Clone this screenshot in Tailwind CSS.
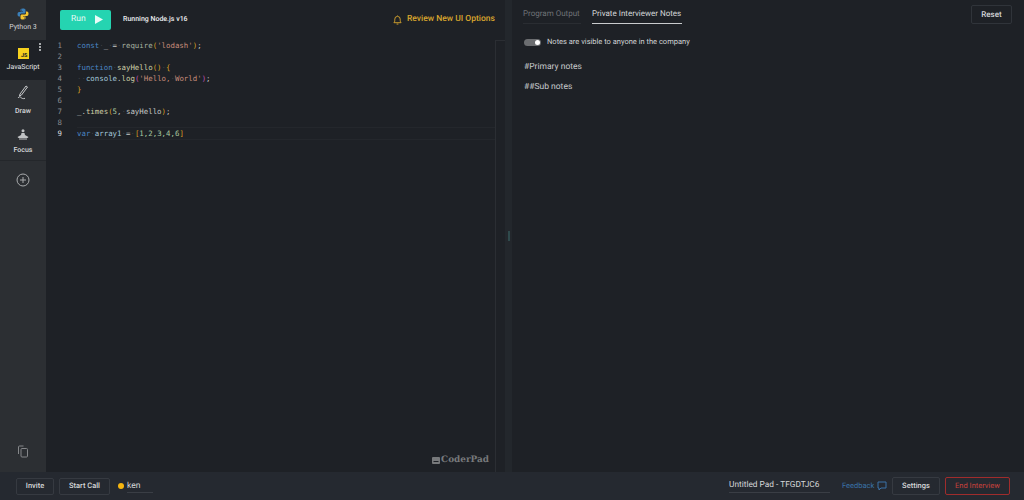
<!DOCTYPE html>
<html lang="en">
<head>
  <meta charset="UTF-8">
  <title>CoderPad</title>
  <script src="https://cdn.jsdelivr.net/npm/@tailwindcss/browser@4"></script>
</head>
<body class="bg-[#1e2126] text-[#e4e6e8] font-['Roboto',sans-serif] [text-rendering:geometricPrecision] overflow-hidden">
  <div class="w-[1024px] h-[500px] flex flex-col">
    <div class="flex h-[472px]">
      <!-- Language sidebar -->
      <div class="w-[46px] bg-[#2c2f33] flex flex-col shrink-0">
        <div class="h-[40px] flex flex-col items-center pt-[8px]">
          <svg width="12" height="12" viewBox="0 0 24 24"><path fill="#3b7fb8" d="M12 1c-5 0-5 2-5 3v3h5v1H4c-2 0-3 2-3 4.500S2 17 4 17h2v-3c0-2 1.500-3 3-3h5c1.500 0 3-1 3-3V4c0-2-2-3-5-3zM9 3a1 1 0 110 2 1 1 0 010-2z"/><path fill="#f5c530" d="M12 23c5 0 5-2 5-3v-3h-5v-1h8c2 0 3-2 3-4.500S22 7 20 7h-2v3c0 2-1.500 3-3 3h-5c-1.500 0-3 1-3 3v4c0 2 2 3 5 3zm3-2a1 1 0 110-2 1 1 0 010 2z"/></svg>
          <span class="text-[7px] leading-[9px] mt-[3px] text-[#d5d7d9]">Python 3</span>
        </div>
        <div class="h-[40px] bg-[#1e2126] relative flex flex-col items-center pt-[8px]">
          <div class="w-[11px] h-[11px] bg-[#f7d21e] flex items-end justify-end pr-[1px]"><span class="text-[5.500px] leading-[6px] font-bold text-[#222]">JS</span></div>
          <span class="text-[7px] leading-[9px] mt-[4px] text-[#e6e8ea]">JavaScript</span>
          <div class="absolute right-[5px] top-[3px] flex flex-col gap-[1px]">
            <i class="block w-[2px] h-[2px] bg-[#d5d7d9] rounded-full"></i>
            <i class="block w-[2px] h-[2px] bg-[#d5d7d9] rounded-full"></i>
            <i class="block w-[2px] h-[2px] bg-[#d5d7d9] rounded-full"></i>
          </div>
        </div>
        <div class="h-[41px] flex flex-col items-center pt-[5px]">
          <svg width="12" height="16" viewBox="0 0 12 16" fill="none" stroke="#c8cacc" stroke-width="1"><path d="M3 9l6-8 1.500 1-6 8-2 1z"/><path d="M1 13c1-1.500 2-1.500 3-.5s2 1.500 4 .8"/></svg>
          <span class="text-[7px] leading-[9px] mt-[6px] font-medium text-[#d5d7d9]">Draw</span>
        </div>
        <div class="h-[40px] border-b border-[#24272b] flex flex-col items-center pt-[8px]">
          <svg width="12" height="11" viewBox="0 0 12 11" fill="#c0c2c4"><circle cx="6" cy="1.800" r="1.500"/><path d="M4.500 4h3l.5 2 3.500 2-1 1H1.500l-1-1 3.500-2z"/><rect x="2" y="9.500" width="8" height="1"/></svg>
          <span class="text-[7px] leading-[9px] mt-[6px] font-medium text-[#d5d7d9]">Focus</span>
        </div>
        <div class="flex justify-center pt-[12px]">
          <svg width="14" height="14" viewBox="0 0 14 14" fill="none" stroke="#a9abad" stroke-width="1"><circle cx="7" cy="7" r="6"/><path d="M7 4v6M4 7h6"/></svg>
        </div>
        <div class="mt-auto flex justify-center pb-[14px]">
          <svg width="12" height="13" viewBox="0 0 12 13" fill="none" stroke="#85878a" stroke-width="1"><path d="M1.500 9V2a1 1 0 011-1h4"/><rect x="4" y="3.500" width="6.500" height="8.500" rx="1"/></svg>
        </div>
      </div>

      <!-- Editor -->
      <div class="w-[459px] shrink-0 flex flex-col relative">
        <div class="h-[39px] flex items-center pl-[14px] pr-[10px] shrink-0">
          <div class="w-[51px] h-[20px] bg-[#25d4b1] rounded-[2px] flex items-center pl-[11px] gap-[8px] text-[8.500px] text-[#e9fbf7]">
            Run
            <svg width="9" height="9" viewBox="0 0 9 9" fill="#eafcf8"><path d="M1 0l8 4.500-8 4.500z"/></svg>
          </div>
          <span class="ml-[12px] text-[7px] font-medium text-[#eceef0]">Running Node.js v16</span>
          <svg class="ml-auto" width="9" height="10" viewBox="0 0 10 11" fill="none" stroke="#d9a62e" stroke-width="1"><path d="M1 8.500c1-1 1-2 1-4a3 3 0 016 0c0 2 0 3 1 4zM4 10h2M5 1V.5"/></svg>
          <span class="ml-[5px] w-[88px] text-[8.500px] font-medium text-[#d9a62e] whitespace-nowrap">Review New UI Options</span>
        </div>
        <div class="flex-1 flex">
          <div class="w-[31px] pt-[1px] text-right pr-[15px] font-['DejaVu_Sans_Mono',monospace] text-[7.400px] leading-[11px] text-[#8b8e92]">
            <div>1</div><div>2</div><div>3</div><div>4</div><div>5</div><div>6</div><div>7</div><div>8</div><div class="text-[#d8dadc]">9</div>
          </div>
          <pre class="flex-1 pt-[1px] font-['DejaVu_Sans_Mono',monospace] text-[7.400px] leading-[11px] text-[#c5c8c6]"><div><span class="text-[#4a86c5]">const</span><span class="text-[#3c4045]">·</span>_<span class="text-[#3c4045]">·</span>=<span class="text-[#3c4045]">·</span><span class="text-[#a8b3a0]">require</span><span class="text-[#d9a023]">(</span><span class="text-[#c98d7b]">'lodash'</span><span class="text-[#d9a023]">)</span>;</div><div> </div><div><span class="text-[#4a86c5]">function</span><span class="text-[#3c4045]">·</span><span class="text-[#cfcfa8]">sayHello</span><span class="text-[#d9a023]">()</span><span class="text-[#3c4045]">·</span><span class="text-[#d9a023]">{</span></div><div><span class="text-[#3c4045]">··</span><span class="text-[#a3c8dc]">console</span>.<span class="text-[#cfcfa8]">log</span><span class="text-[#c052b5]">(</span><span class="text-[#c98d7b]">'Hello,<span class="text-[#3c4045]">·</span>World'</span><span class="text-[#c052b5]">)</span>;</div><div><span class="text-[#d9a023]">}</span></div><div> </div><div>_.<span class="text-[#cfcfa8]">times</span><span class="text-[#d9a023]">(</span><span class="text-[#a8c8a0]">5</span>,<span class="text-[#3c4045]">·</span>sayHello<span class="text-[#d9a023]">)</span>;</div><div> </div><div class="border-y border-[#24272c] -my-[1px] h-[13px] leading-[11px]"><span class="text-[#4a86c5]">var</span><span class="text-[#3c4045]">·</span><span class="text-[#a3c8dc]">array1</span><span class="text-[#3c4045]">·</span>=<span class="text-[#3c4045]">·</span><span class="text-[#d9a023]">[</span><span class="text-[#a8c8a0]">1,2,3,4,6</span><span class="text-[#d9a023]">]</span></div></pre>
          <div class="w-[10px] border-l border-t border-[#2b2e33] mt-[1px]"></div>
        </div>
        <div class="absolute right-[16px] bottom-[6px] flex items-start gap-[1px] text-[#77797b]">
          <svg class="mt-[2px]" width="8" height="7" viewBox="0 0 8 7" fill="#77797b"><rect width="8" height="7" rx="1"/><rect x="1.500" y="4" width="5" height="1" fill="#1e2126"/></svg>
          <span class="font-['DejaVu_Serif',serif] font-bold text-[8.900px] leading-[11px]">CoderPad</span>
        </div>
      </div>

      <!-- Splitter -->
      <div class="w-[7px] shrink-0 bg-[#23272c] flex items-center justify-center">
        <div class="w-[2px] h-[10px] bg-[#2f4a4c]"></div>
      </div>

      <!-- Notes panel -->
      <div class="flex-1 flex flex-col pl-[12px] pr-[12px]">
        <div class="h-[25px] flex items-start justify-between shrink-0">
          <div class="flex gap-[11px] text-[8px] pt-[8px] -ml-[1px]">
            <div class="h-[16px] w-[58px] border-b border-[#2a2d32] text-[#6f7276] whitespace-nowrap">Program Output</div>
            <div class="h-[16px] w-[90px] border-b border-[#c9cbcd] text-[#d5d7d9] whitespace-nowrap">Private Interviewer Notes</div>
          </div>
          <div class="mt-[5px] w-[41px] h-[19px] border border-[#30343a] rounded-[2px] flex items-center justify-center text-[8px] font-medium text-[#d5d7d9]">Reset</div>
        </div>
        <div class="mt-[12px] flex items-center h-[10px]">
          <div class="w-[17px] h-[7px] rounded-full bg-[#6b6d70] relative">
            <i class="absolute right-[1px] top-[1px] w-[5px] h-[5px] rounded-full bg-white"></i>
          </div>
          <span class="ml-[6px] text-[7.500px] text-[#d0d2d4]">Notes are visible to anyone in the company</span>
        </div>
        <p class="mt-[15px] text-[8.500px] leading-[11px] text-[#c8cacc]">#Primary notes</p>
        <p class="mt-[9px] text-[8.500px] leading-[11px] text-[#c8cacc]">##Sub notes</p>
      </div>
    </div>

    <!-- Bottom bar -->
    <div class="h-[28px] bg-[#252930] flex items-center pl-[16px] pr-[14px] text-[7.500px] text-[#d5d7d9]">
      <div class="w-[38px] h-[17px] border border-[#363a41] rounded-[2px] flex items-center justify-center font-medium">Invite</div>
      <div class="ml-[5px] w-[51px] h-[17px] border border-[#363a41] rounded-[2px] flex items-center justify-center font-medium">Start Call</div>
      <i class="ml-[8px] w-[6px] h-[6px] rounded-full bg-[#f5b50f]"></i>
      <span class="ml-[3px] w-[26px] h-[13px] border-b border-[#3a3e45] leading-[12px] text-[8.500px]">ken</span>
      <span class="ml-auto w-[101px] h-[14px] border-b border-[#3a3e45] leading-[13px] text-[8.300px] whitespace-nowrap">Untitled Pad - TFGDTJC6</span>
      <span class="ml-[12px] w-[33px] text-[#3a72a8]">Feedback</span>
      <svg class="ml-[2px]" width="10" height="10" viewBox="0 0 10 10" fill="none" stroke="#3a72a8" stroke-width="1"><path d="M1 1h8v6H4L2 9V7H1z"/></svg>
      <div class="ml-[5px] w-[48px] h-[18px] border border-[#363a41] rounded-[2px] flex items-center justify-center font-medium">Settings</div>
      <div class="ml-[5px] w-[65px] h-[18px] border border-[#a02c2c] rounded-[2px] flex items-center justify-center text-[#c8413c]">End Interview</div>
    </div>
  </div>
</body>
</html>
